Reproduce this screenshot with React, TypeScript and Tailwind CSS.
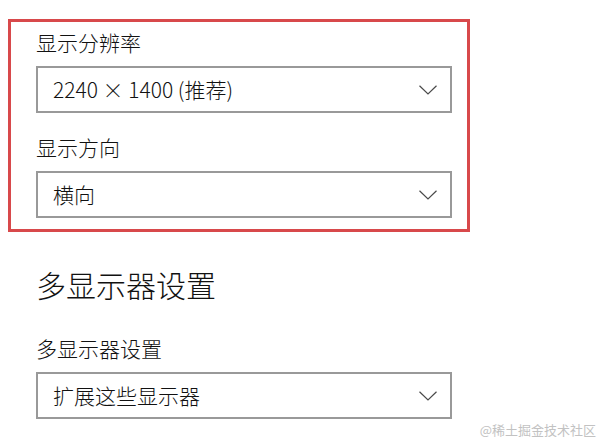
import React from "react";

const font = { fontFamily: '"Noto Sans CJK SC", "Noto Sans", sans-serif' };

function Chevron() {
  return (
    <svg width="18" height="10" viewBox="0 0 18 10" fill="none">
      <polyline points="0.5,0.8 9,9 17.5,0.8" stroke="#4a4a4a" strokeWidth="1.2" />
    </svg>
  );
}

function Select({ value }: { value: string }) {
  return (
    <div className="h-[47px] w-[416px] flex items-center justify-between border-2 border-[#999999] bg-white pl-[15px] pr-[13px]">
      <span className="text-[21px] leading-none font-light text-[#111111]">{value}</span>
      <Chevron />
    </div>
  );
}

export default function App() {
  return (
    <main className="relative w-[600px] h-[442px] bg-white overflow-hidden" style={font}>
      <div className="pt-[19px] pl-[8px]">
        <div className="w-[462px] h-[213px] border-[3px] border-[#d8494b] pl-[25px] pt-[8px]">
          <div className="h-[24px] leading-[24px] text-[21px] font-light text-[#111111] mb-[12px]">显示分辨率</div>
          <Select value="2240 × 1400 (推荐)" />
          <div className="h-[24px] leading-[24px] text-[21px] font-light text-[#111111] mt-[22px] mb-[12px]">显示方向</div>
          <Select value="横向" />
        </div>
      </div>
      <div className="pl-[36px]">
        <h2 className="mt-[32px] h-[40px] leading-[40px] text-[30px] font-light text-[#111111]">多显示器设置</h2>
        <div className="mt-[32px] h-[24px] leading-[24px] text-[21px] font-light text-[#111111] mb-[12px]">多显示器设置</div>
        <Select value="扩展这些显示器" />
      </div>
      <div className="absolute right-[4px] bottom-[4px] text-[13px] leading-[16px] text-[#c2c2c2]">
        @稀土掘金技术社区
      </div>
    </main>
  );
}
